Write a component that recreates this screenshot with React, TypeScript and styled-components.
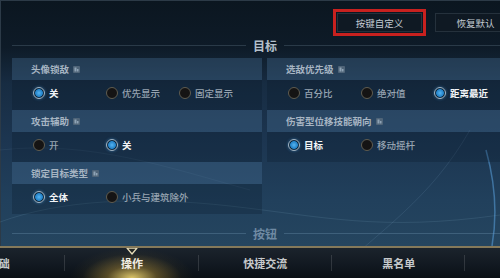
import React from 'react';
import styled, { createGlobalStyle, css } from 'styled-components';

const GlobalStyle = createGlobalStyle`
  html, body { margin: 0; padding: 0; background: #0c1722; }
  body { font-family: "Noto Sans CJK SC", "Noto Sans", sans-serif; }
  * { box-sizing: border-box; }
`;

const Screen = styled.div`
  position: relative;
  width: 500px;
  height: 278px;
  overflow: hidden;
  background: linear-gradient(180deg, #0b1620 0%, #0e1b28 17%, #172c42 30%, #1c3550 50%, #21405c 72%, #25455f 88%);
  box-shadow: inset 1px 1px 0 #2c3a47;
`;

const Decor = styled.svg`
  position: absolute;
  left: 0;
  top: 0;
  width: 500px;
  height: 278px;
  pointer-events: none;
  z-index: 0;
`;

const Content = styled.div`
  position: relative;
  z-index: 1;
  width: 530px;
  height: 278px;
  display: flex;
  flex-direction: column;
`;

const TopBar = styled.div`
  height: 38px;
  display: flex;
  justify-content: flex-end;
  align-items: flex-start;
  gap: 13px;
  padding: 13px 10px 0 0;
`;

const TopButton = styled.div<{ $highlighted?: boolean }>`
  width: 85px;
  height: 19px;
  display: flex;
  align-items: center;
  justify-content: center;
  background: #0f1923;
  border: 1px solid #25313c;
  color: #c3cbd3;
  font-size: 9.5px;
  padding-right: ${(p) => (p.$highlighted ? 0 : 4)}px;
  ${(p) =>
    p.$highlighted &&
    css`
      outline: 3px solid #c8211f;
      outline-offset: 1px;
    `}
`;

const SectionTitle = styled.div<{ $faint?: boolean }>`
  height: 14px;
  display: flex;
  align-items: center;
  gap: 7px;
  padding: 0 12px;
  font-size: 12px;
  font-weight: 700;
  color: ${(p) => (p.$faint ? '#6f8aa3' : '#b4c0cb')};
  &::before,
  &::after {
    content: '';
    flex: 1;
    height: 1px;
    background: ${(p) => (p.$faint ? 'rgba(130,170,200,0.28)' : '#2a3a48')};
  }
`;

const Columns = styled.div`
  margin-top: 6px;
  height: 156px;
  padding: 0 12px;
  display: grid;
  grid-template-columns: 250px 251px;
  column-gap: 5px;
  align-items: start;
`;

const Column = styled.div`
  display: flex;
  flex-direction: column;
`;

const GroupHeader = styled.div`
  height: 22px;
  display: flex;
  align-items: center;
  gap: 4px;
  padding-left: 19px;
  font-size: 9.5px;
  font-weight: 700;
  color: #a7b5c3;
  background: rgba(74, 114, 152, 0.34);
`;

const Options = styled.div`
  height: 30px;
  display: flex;
  align-items: flex-start;
  padding: 7px 0 0 21px;
  background: rgba(8, 22, 38, 0.26);
`;

const Option = styled.div<{ $selected?: boolean }>`
  width: 73px;
  height: 12px;
  display: flex;
  align-items: center;
  gap: 4px;
  font-size: 9.5px;
  white-space: nowrap;
  font-weight: ${(p) => (p.$selected ? 700 : 500)};
  color: ${(p) => (p.$selected ? '#f3f5f7' : '#97a4b1')};
`;

const Radio = styled.span<{ $selected?: boolean }>`
  flex: none;
  width: 12px;
  height: 12px;
  border-radius: 50%;
  ${(p) =>
    p.$selected
      ? css`
          border: 1.5px solid #a3b6c5;
          background: radial-gradient(circle, #54b4f2 0%, #2381c6 50%, #0c2a42 60%, #0c2a42 100%);
          box-shadow: 0 0 3px rgba(80, 170, 240, 0.5);
        `
      : css`
          border: 1.5px solid #5f5c50;
          background: #151414;
        `}
`;

const TabBar = styled.div`
  margin-top: 6px;
  height: 32px;
  border-top: 2px solid #85795a;
  background: linear-gradient(180deg, #1b232c 0%, #111820 60%, #0b1015 100%);
  display: flex;
  overflow: hidden;
`;

const TabTrack = styled.div`
  display: flex;
  margin-left: -68px;
`;

const Tab = styled.div<{ $active?: boolean }>`
  position: relative;
  flex: none;
  width: 133.33px;
  height: 30px;
  display: flex;
  align-items: center;
  justify-content: center;
  font-size: 11px;
  font-weight: 700;
  color: ${(p) => (p.$active ? '#f1ede2' : '#c6c9cc')};
  ${(p) =>
    p.$active &&
    css`
      background: radial-gradient(ellipse 62px 30px at 50% 100%, rgba(255, 228, 120, 0.85) 0%, rgba(200, 160, 60, 0.4) 40%, rgba(120, 100, 40, 0.08) 80%, transparent 100%);
    `}
  &::after {
    content: '';
    position: absolute;
    right: 0;
    top: 7px;
    bottom: 7px;
    width: 1px;
    background: rgba(255, 255, 255, 0.13);
  }
`;

const Indicator = styled.svg`
  position: absolute;
  top: -1px;
  left: 50%;
  margin-left: -6px;
`;

const InfoIcon = () => (
  <svg width="7" height="7" viewBox="0 0 7 7">
    <rect x="0" y="0" width="7" height="7" rx="1" fill="#4f6478" />
    <rect x="1.5" y="1.5" width="2" height="4" fill="#8fa3b5" />
    <rect x="4" y="3" width="1.5" height="2.5" fill="#8fa3b5" />
  </svg>
);

type Group = { title: string; options: string[]; selected: number };

const leftGroups: Group[] = [
  { title: '头像锁敌', options: ['关', '优先显示', '固定显示'], selected: 0 },
  { title: '攻击辅助', options: ['开', '关'], selected: 1 },
  { title: '锁定目标类型', options: ['全体', '小兵与建筑除外'], selected: 0 },
];

const rightGroups: Group[] = [
  { title: '选敌优先级', options: ['百分比', '绝对值', '距离最近'], selected: 2 },
  { title: '伤害型位移技能朝向', options: ['目标', '移动摇杆'], selected: 0 },
];

const GroupBlock = ({ group }: { group: Group }) => (
  <>
    <GroupHeader>
      {group.title}
      <InfoIcon />
    </GroupHeader>
    <Options>
      {group.options.map((o, i) => (
        <Option key={o} $selected={i === group.selected}>
          <Radio $selected={i === group.selected} />
          {o}
        </Option>
      ))}
    </Options>
  </>
);

const tabs = ['基础', '操作', '快捷交流', '黑名单'];

export default function App() {
  return (
    <>
      <GlobalStyle />
      <Screen>
        <Decor viewBox="0 0 500 278">
          <path d="M0 222 C 60 200, 140 196, 230 206 S 380 232, 500 215" stroke="rgba(150,190,220,0.13)" strokeWidth="1" fill="none" />
          <path d="M0 150 C 90 140, 170 168, 250 190" stroke="rgba(150,190,220,0.08)" strokeWidth="1" fill="none" />
          <path d="M330 278 C 380 230, 430 200, 470 130" stroke="rgba(150,190,220,0.12)" strokeWidth="1" fill="none" />
          <path d="M486 150 Q 500 200 492 246" stroke="rgba(90,160,220,0.55)" strokeWidth="1.5" fill="none" />
        </Decor>
        <Content>
          <TopBar>
            <TopButton $highlighted>按键自定义</TopButton>
            <TopButton>恢复默认</TopButton>
          </TopBar>
          <SectionTitle>目标</SectionTitle>
          <Columns>
            <Column>
              {leftGroups.map((g) => (
                <GroupBlock key={g.title} group={g} />
              ))}
            </Column>
            <Column>
              {rightGroups.map((g) => (
                <GroupBlock key={g.title} group={g} />
              ))}
            </Column>
          </Columns>
          <div style={{ height: 12 }} />
          <SectionTitle $faint>按钮</SectionTitle>
          <TabBar>
            <TabTrack>
              {tabs.map((t) => (
                <Tab key={t} $active={t === '操作'}>
                  {t === '操作' && (
                    <Indicator width="12" height="8" viewBox="0 0 12 8">
                      <path d="M1 1 L11 1 L6 7 Z" fill="rgba(40,40,30,0.6)" stroke="#e6dcb8" strokeWidth="1.3" strokeLinejoin="round" />
                    </Indicator>
                  )}
                  {t}
                </Tab>
              ))}
            </TabTrack>
          </TabBar>
        </Content>
      </Screen>
    </>
  );
}
